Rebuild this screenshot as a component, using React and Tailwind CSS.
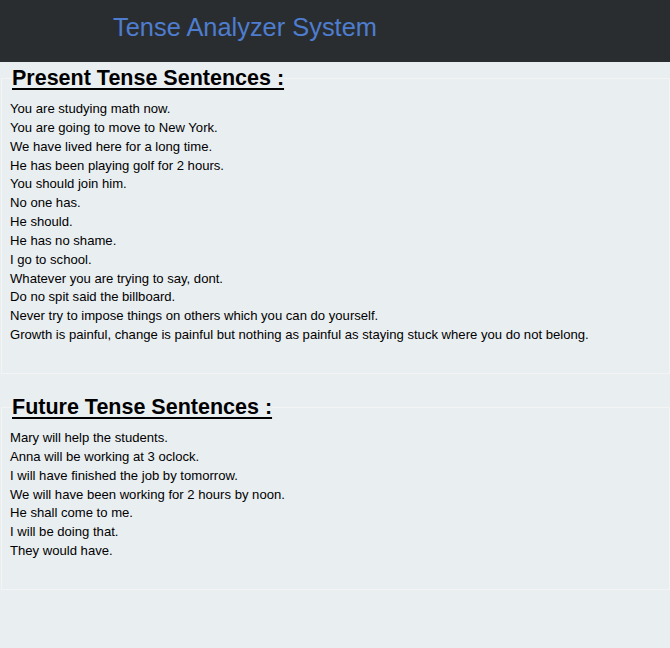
import React from 'react';

const present = [
  'You are studying math now.',
  'You are going to move to New York.',
  'We have lived here for a long time.',
  'He has been playing golf for 2 hours.',
  'You should join him.',
  'No one has.',
  'He should.',
  'He has no shame.',
  'I go to school.',
  'Whatever you are trying to say, dont.',
  'Do no spit said the billboard.',
  'Never try to impose things on others which you can do yourself.',
  'Growth is painful, change is painful but nothing as painful as staying stuck where you do not belong.',
];

const future = [
  'Mary will help the students.',
  'Anna will be working at 3 oclock.',
  'I will have finished the job by tomorrow.',
  'We will have been working for 2 hours by noon.',
  'He shall come to me.',
  'I will be doing that.',
  'They would have.',
];

const TenseGroup = ({ title, items, className = '' }) => (
  <fieldset className={`ml-px border border-[#f4f4f4] pl-[8px] pb-[28px] ${className}`}>
    <legend className="ml-[2px] text-[21.5px] leading-[25px] font-bold underline underline-offset-[3px] decoration-2 text-black">
      {title}
    </legend>
    <div className="mt-[9px] text-[13.1px] leading-[18.85px] text-black">
      {items.map((s) => (
        <p key={s}>{s}</p>
      ))}
    </div>
  </fieldset>
);

const App = () => {
  return (
    <div className="min-h-[648px] bg-[#e9eef1] font-['Liberation_Sans',Arial,sans-serif]">
      <header className="h-[62px] bg-[#2a2d30] flex items-center pl-[113px]">
        <h1 className="text-[25.4px] leading-none text-[#4e7dcf] -mt-[6px]">Tense Analyzer System</h1>
      </header>
      <main className="pt-[4px]">
        <TenseGroup title="Present Tense Sentences :" items={present} />
        <TenseGroup title="Future Tense Sentences :" items={future} className="mt-[21px]" />
      </main>
    </div>
  );
};

export default App;
